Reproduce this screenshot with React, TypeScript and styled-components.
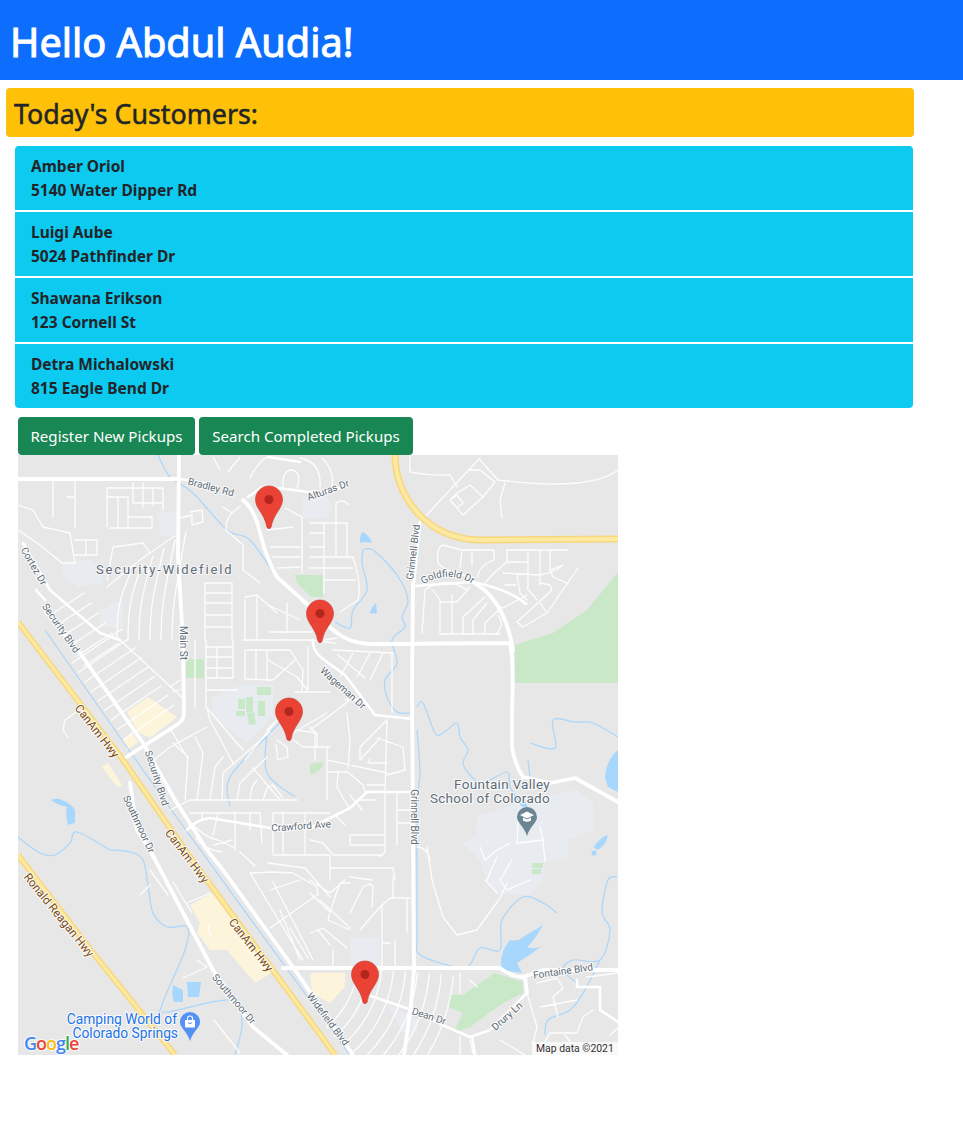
import React from "react";
import styled, { createGlobalStyle } from "styled-components";

const GlobalStyle = createGlobalStyle`
  html, body { margin: 0; padding: 0; background: #fff; }
  body { font-family: "Noto Sans", "Open Sans", sans-serif; color: #212529; }
`;

const Header = styled.header`
  background: #0d6efd;
  height: 80px;
  padding: 18px 0 0 10px;
  box-sizing: border-box;
`;
const Title = styled.h1`
  margin: 0;
  color: #fff;
  font-size: 39.7px;
  font-weight: 400;
  line-height: 48px;
  -webkit-text-stroke: 1px #fff;
`;
const Main = styled.main`
  padding: 8px 49px 0 6px;
`;
const Banner = styled.div`
  background: #ffc107;
  border-radius: 4px;
  height: 49px;
  padding-left: 8px;
  box-sizing: border-box;
`;
const BannerTitle = styled.h3`
  margin: 0;
  font-size: 26.8px;
  font-weight: 400;
  line-height: 52px;
  color: #212529;
  -webkit-text-stroke: 0.5px #212529;
`;
const CustomerList = styled.ul`
  list-style: none;
  margin: 9px 1px 0 9px;
  padding: 0;
  display: flex;
  flex-direction: column;
  gap: 2px;
  border-radius: 4px;
  overflow: hidden;
`;
const CustomerRow = styled.li`
  background: #0dcaf0;
  height: 64px;
  padding: 8px 16px;
  box-sizing: border-box;
`;
const CustomerLine = styled.div`
  font-size: 15.5px;
  font-weight: 700;
  line-height: 24px;
  color: #212529;
`;
const Actions = styled.div`
  display: flex;
  gap: 4px;
  margin: 9px 0 0 18px;
`;
const ActionButton = styled.button<{ $w: number }>`
  width: ${(p) => p.$w}px;
  height: 38px;
  padding: 0;
  border: 0;
  border-radius: 4px;
  background: #198754;
  color: #fff;
  font-family: inherit;
  font-size: 15.1px;
  line-height: 24px;
  white-space: nowrap;
`;
const MapFrame = styled.div`
  width: 600px;
  height: 600px;
  margin-left: 18px;
  padding-bottom: 77px;
`;
const MapSvg = styled.svg`
  display: block;
  width: 600px;
  height: 600px;
  background: #e7e7e7;
`;
const Label = styled.text<{ $kind?: string }>`
  font-family: Roboto, "Liberation Sans", sans-serif;
  font-size: ${(p) => (p.$kind === "place" ? 13.5 : p.$kind === "poi" ? 13.8 : p.$kind === "hwy" ? 11.7 : 10)}px;
  letter-spacing: ${(p) => (p.$kind === "place" ? 0.3 : 0)}px;
  fill: ${(p) => (p.$kind === "hwy" ? "#7a4a14" : p.$kind === "poi" ? "#1a73e8" : "#5c6b77")};
  stroke: #fff;
  stroke-opacity: 0.85;
  stroke-width: 2px;
  paint-order: stroke;
  text-anchor: ${(p) => (p.$kind === "place" || p.$kind === "poi" ? "end" : "middle")};
  dominant-baseline: ${(p) => (p.$kind === "place" || p.$kind === "poi" ? "auto" : "central")};
`;
const AreaName = styled.text`
  font-family: Roboto, "Liberation Sans", sans-serif;
  font-size: 13px;
  letter-spacing: 1.85px;
  fill: #5c6b77;
  stroke: #fff;
  stroke-opacity: 0.7;
  stroke-width: 2px;
  paint-order: stroke;
`;
const GoogleMark = styled.text`
  font-family: "Open Sans", "Liberation Sans", sans-serif;
  font-size: 18px;
  font-weight: 600;
  letter-spacing: -1px;
  stroke: #fff;
  stroke-opacity: 0.8;
  stroke-width: 2px;
  paint-order: stroke;
`;
const Credit = styled.text`
  font-family: Roboto, "Liberation Sans", sans-serif;
  font-size: 10.4px;
  fill: #333;
`;

const customers = [
  ["Amber Oriol", "5140 Water Dipper Rd"],
  ["Luigi Aube", "5024 Pathfinder Dr"],
  ["Shawana Erikson", "123 Cornell St"],
  ["Detra Michalowski", "815 Eagle Bend Dr"],
];

/* turn a run of points into a smooth curve, for creeks */
const smooth = (pts: number[][]) => {
  let d = `M${pts[0][0]} ${pts[0][1]}`;
  for (let i = 0; i < pts.length - 1; i++) {
    const p0 = pts[i - 1] || pts[i];
    const p1 = pts[i];
    const p2 = pts[i + 1];
    const p3 = pts[i + 2] || p2;
    const c1 = [p1[0] + (p2[0] - p0[0]) / 6, p1[1] + (p2[1] - p0[1]) / 6];
    const c2 = [p2[0] - (p3[0] - p1[0]) / 6, p2[1] - (p3[1] - p1[1]) / 6];
    d += ` C${c1[0].toFixed(1)} ${c1[1].toFixed(1)} ${c2[0].toFixed(1)} ${c2[1].toFixed(1)} ${p2[0]} ${p2[1]}`;
  }
  return d;
};

const parks = [
  "M515 645 L553 633 L587 610 L618 572 V683 H515Z",
  "M295 575 H323 V597 H311 L297 583Z",
  "M186 659 H204 V678 H186Z",
  "M257 687 H271 V695 H257Z",
  "M238 699 H245 V709 H238Z M246 697 H253 V712 H246Z M258 701 H265 V716 H258Z M236 711 H245 V716 H236Z M247 713 L254 712 L256 724 L249 725Z",
  "M310 764 L323 762 Q322 772 310 775Z",
  "M450 995 L463 995 L495 973 L523 982 L523 993 L503 1003 L470 1027 L453 1033 L463 1013 L448 1007Z",
  "M532 863 H543 V868 H532Z M532 869 H541 V874 H532Z",
];
const campus = [
  "M477 817 L517 803 L577 790 L593 803 V830 L568 840 L567 860 L545 862 L543 880 L530 895 L497 893 L487 880 L480 860 L463 843 L475 837Z",
  "M212 697 L240 685 H273 V715 L247 743 L212 717Z",
  "M350 938 H380 V967 H350Z",
  "M390 1007 L417 1018 V1033 H402Z",
  "M303 497 H328 L333 508 L326 518 H303Z",
  "M157 512 H177 V537 L160 535Z",
  "M63 562 L90 560 L103 570 L103 583 L78 587 L63 578Z",
  "M100 610 L123 600 V627 H100Z",
];
const commercial = [
  "M127 712 L148 697 L177 717 L150 738 L138 732Z",
  "M123 740 L132 733 L138 742 L127 750Z",
  "M102 767 L108 763 L122 785 L117 787Z",
  "M190 905 L212 893 L273 972 L255 983 L227 950 H210 L197 933 L200 923Z",
  "M310 973 H345 V987 L330 1003 L312 993Z",
  "M293 966 H333 V970 H293Z",
];
const water = [
  "M360 543 Q360 533 363 532 Q370 536 372 543 Q365 541 360 543Z",
  "M370 613 Q372 606 376 603 L377 613 Q373 614 370 613Z",
  "M605 778 Q606 760 618 750 V792 L608 787Z",
  "M594 847 Q600 837 608 835 Q606 846 597 850Z",
  "M51 800 Q55 798 60 799 Q72 804 75 810 V823 L68 825 Q65 815 67 807 Q57 805 51 800Z",
  "M173 985 L183 990 V1002 L174 1002 Q171 994 173 985Z",
  "M187 982 H201 L199 997 H188Z",
  "M510 940 Q518 942 523 937 L543 925 Q535 940 527 947 Q534 950 542 946 Q530 955 517 963 L522 973 L502 970 Q498 955 510 940Z",
  "M520 805 L525 800 L528 808Z",
];
const streams = [
  [[363,550],[373,550],[397,575],[408,600],[402,617],[405,627],[392,640],[397,663],[385,680],[387,697],[397,712],[410,713]],
  [[363,550],[362,563],[367,590],[353,610],[350,628],[335,622]],
  [[158,455],[170,477],[193,493],[227,530],[250,540],[277,577],[300,600]],
  [[417,707],[423,703],[435,733],[443,733],[457,723],[460,737],[468,750],[463,763],[472,777],[483,783],[507,772],[510,787],[523,807]],
  [[417,730],[420,773],[417,803],[417,880],[417,940],[418,953],[440,963],[467,967],[480,948],[500,950],[502,920],[523,897],[543,903],[557,913]],
  [[530,743],[555,748],[553,720],[575,722],[593,723],[618,737]],
  [[528,760],[530,778]],
  [[617,877],[608,880],[602,912],[610,930],[600,960],[573,960],[563,970],[577,983]],
  [[600,960],[585,990],[570,1010],[548,1020],[545,1035]],
  [[110,850],[130,852],[143,860],[148,885],[153,913],[167,927],[187,927],[185,950],[162,1005],[167,1012],[230,1000],[242,1023],[235,1055]],
  [[18,837],[40,853],[55,855],[70,843],[77,832],[110,850]],
  [[230,807],[230,777],[270,733],[280,723]],
  [[267,733],[267,773],[295,797]],
  [[45,630],[175,815],[350,1055]],
].map(smooth);
const thin = [
  "M53 480 V517 M75 480 V528 M67 497 H75 M107 488 V527 M118 497 V528 M128 497 V528 M152 517 V528 M107 488 H163 M107 497 H128 M128 517 H152 M110 528 H152",
  "M133 483 V503 M143 483 V507 M153 488 V505 M163 488 V510 M133 503 H163",
  "M18 505 L33 510 L43 527 L70 533 L75 563",
  "M18 530 L40 545 L62 563 L75 563 M75 540 H97 V555 H75 M86 540 V555",
  "M107 580 L113 547 L143 543 L150 553",
  "M107 587 L140 560 L173 537 L178 535",
  "M180 518 L192 515 V525 L203 522 L202 510 L190 512",
  "M213 457 L220 470 M240 457 L228 472 M267 457 Q258 462 250 478 M283 488 Q282 470 292 470 Q302 472 297 488 M300 458 Q322 462 320 488 M322 458 Q335 470 332 488",
  "M240 507 Q225 515 226 530 L243 545 L243 570 L260 583 M223 507 L232 513",
  "M267 530 L293 527 M270 547 H300 M273 557 H300 M302 517 V573 M285 508 L302 517 M278 568 L300 567",
  "M310 523 H347 M310 533 H323 M310 547 H323 M310 557 H353 M310 568 H353 M323 580 H355 M324 523 V593 M336 503 V557 M347 523 V557 M353 557 Q362 585 358 600 L340 612 M336 503 Q342 498 349 505",
  "M420 522 L480 458 M480 460 L498 480 Q550 486 577 483 Q605 480 618 470 M410 455 V472 Q430 476 450 475 L457 487",
  "M457 493 L470 485 L483 497 L463 515 L450 500Z M450 500 L457 495 L463 503 L457 508Z M470 470 L480 470 L495 482 L483 497 M505 483 L500 500 L502 518",
  "M475 578 Q445 572 438 563 Q436 550 442 545 L462 550 H494 V560 Q478 566 478 577 M462 550 L460 568 M472 550 V565",
  "M507 550 H568 M507 562 H527 M507 550 V562 L495 572 L485 583 M528 550 V587 M540 550 V575 M550 550 V570 L563 565 M503 573 L540 575 Q555 572 563 565",
  "M517 575 L520 593 L527 600 M540 583 L550 585 Q553 590 550 592 L517 622 L523 627 L547 613 L578 568 M550 570 L553 577 L567 583 M527 595 L503 608 M505 585 H516 M540 575 V585 M537 600 L527 588 M547 613 L540 603",
  "M425 590 L422 633 M433 590 L440 600 V633 M425 590 Q445 575 467 590 M452 595 V633 M440 602 H457 L470 587 M463 617 V633 M463 617 L485 597 M473 633 V620 L487 603 M485 633 V623 L502 607 M498 615 Q505 625 497 633 M440 634 H500",
  "M333 650 L393 653 M392 653 V690 M353 653 L340 677 M370 653 L357 677 M383 653 L370 680 M338 655 L365 678 M324 640 L337 638 M310 640 L335 643",
  "M310 730 L333 713 L350 700 M347 713 L350 740 L348 768 M360 760 L380 738 M387 720 L385 790 M387 720 L360 747 V760 M377 738 L403 747 L405 770 L387 775 M327 760 L387 773 M327 747 V797 M327 772 H348 L363 785 L365 792 M367 785 H385 M338 772 L337 787 L350 810 M310 727 L315 732 V760 M310 747 H327 M370 758 L368 763 H387 M345 700 L360 700 M392 690 V712",
  "M397 793 V845 M385 793 V852 L380 857 M397 823 H412 M397 810 H412 M350 835 H385 M350 845 H385 M350 835 V845 M310 840 L323 843 L333 855 H383 M330 857 V880 M330 868 H393 L395 880 M335 815 L345 825 M350 795 L362 810 M360 800 H375",
  "M190 813 H260 L262 843 M273 813 H330 M273 813 V853 M283 813 V853 M305 813 V853 M273 855 H330 M202 813 V820 M218 813 L213 835 M235 813 V850 M250 813 V830 M190 822 Q205 838 218 840 L235 848",
  "M170 810 L190 800 H297 M185 800 L188 757 L173 743 M197 800 L203 753 L195 737 M210 800 L215 767 L223 757 M222 800 L223 773 L270 732 M237 800 L240 783 L267 757 M250 800 L252 787 L257 780 M253 768 L280 800 M263 800 L267 788 L273 785 L282 797",
  "M207 708 L210 720 L233 763 M207 708 L243 750 M170 728 L187 757 M150 763 L170 747 L207 727 M195 640 V708 M206 640 V708 M217 647 V678 M207 647 H233 M207 657 H233 M207 668 H233 M207 678 H233 M233 640 V678 M207 690 H237",
  "M247 650 H290 L303 670 L302 690 M245 650 V678 M256 650 V680 M267 650 V680 M245 679 L273 680 L295 660 M268 660 L297 677 L308 690 M308 647 V690 M295 692 H330 M267 730 L277 720 L245 760",
  "M293 733 L327 713 M297 730 L317 733 V747 M293 740 L303 747 H330 M277 740 L287 747 L288 757 L278 760 L276 745 M327 747 V800",
  "M120 640 L185 700 M170 687 L180 680 M173 692 L185 688",
  "M63 730 L65 720 L82 708 M63 730 L68 738",
  "M173 882 L192 913 M187 903 L210 893 M197 960 L207 967 L183 978 M208 925 L210 935 M214 1020 L240 1053 M140 895 L150 885",
  "M250 873 L303 960 M273 882 L313 960 M270 928 L317 895 M250 873 L273 872 L293 873 L317 887 L318 895 M268 863 L305 868 L330 897 M330 945 L318 930 M290 928 L308 958 M270 890 L300 880 M280 910 L300 960",
  "M310 893 L330 912 L328 920 L350 930 M330 912 L340 883 H350 M350 913 L363 887 Q372 882 373 887 L372 907 M360 930 L380 907 L390 898 H410 M382 907 V970 M407 898 V932 M393 877 V898 M390 943 H382 M310 933 L323 928 L347 948 M333 950 V967 M350 877 L372 880 M310 880 L330 893 L345 880 M320 900 L350 928 M395 940 V968",
  "M527 993 L537 1027 L533 1043 M537 983 L557 978 L563 988 L553 997 L558 1017 M540 1007 L577 1000 M543 1045 L550 1033 H577 L583 1017 L593 1010 M587 977 L618 973 M460 973 V993 M470 980 L477 987 M470 1040 L473 1053 M460 1037 V1055 M500 1040 L525 1055 M565 1035 L580 1055 M610 1035 L618 1028",
  "M517 843 L543 840 L545 862 M480 847 L485 860 L497 850 L510 843 M497 857 L487 880 M430 860 Q427 847 417 847 M427 847 L432 880 L443 917 L457 935 L477 930 L500 898 L507 883 M540 827 L543 840 M518 820 L517 843 M512 860 L500 880 L507 890 L530 880 M485 880 L497 893",
  "M196 838 Q205 850 222 852 M240 852 L255 866 M214 845 L232 840 M150 870 L168 895",
];
const medium = [
  "M248 497 L262 487 Q275 487 307 492 Q335 492 347 485",
  "M180 479 L210 484 M268 457 L300 462",
  "M420 522 L414 583",
  "M526 604 Q510 590 473 582 L414 586",
  "M187 830 Q195 820 210 818 L270 828 H310 L350 808 L367 792 H410",
  "M313 640 C312 655 325 660 345 675 L375 715 L413 719",
  "M368 995 L412 1010 L447 1027 L470 1037 L490 1030 L527 993",
  "M472 1037 L475 1055",
  "M577 980 V987 H600 V1010 L618 1022",
  "M23 543 L50 590 L100 633 L120 640",
  "M36 590 L45 600",
];
const major = [
  "M18 479 H178",
  "M179 455 L178 557 L183 640 L184 713 Q184 720 178 724 L125 758",
  "M243 500 Q255 510 260 533 Q267 560 277 577 L310 607 Q330 630 345 638 Q360 645 380 644 L510 643 Q514 660 512 710 L512 747 Q515 765 523 777 L550 783 L575 778 L618 802",
  "M473 582 Q505 600 513 650",
  "M413 583 L412 690 L414 970 L411 1005 L404 1055",
  "M46 612 L80 653 L143 743 L175 800 L207 850 L223 870 L293 967 L353 1055",
  "M283 968 H500 Q512 977 523 977 L543 970 H618",
  "M130 783 L137 830 L150 850 L213 970 L253 1027 L287 1055",
  "M525 977 L527 993",
];

const fams: string[] = [];
for (let i = 0; i < 9; i++) {
  const x = 84 + i * 6.5;
  const y = 655 + i * 9.5;
  fams.push(`M${x - 12} ${y + 8} L${x + 38} ${y - 26}`);
}
for (let i = 0; i < 6; i++) {
  const x = 58 + i * 7;
  const y = 610 + i * 10;
  fams.push(`M${x - 9} ${y + 6} L${x + 26} ${y - 17}`);
}
for (let i = 0; i < 6; i++) {
  const x = 117 + i * 11;
  const ey = 580 - (i + 1) * 8;
  fams.push(`M${x} 640 C${x} 610 ${x + 2} 598 ${x + 14} ${ey}`);
}
fams.push("M205 583 V640 M232 583 V640 M205 583 H232 M205 593 H232 M205 603 H232 M205 615 H232 M205 627 H232 M245 600 V640 M245 597 L257 595 L277 613 M257 597 V640 M268 605 L300 620 M287 603 V633 M270 632 H312 M243 640 H310");
/* the fan of streets south of Fontaine Blvd */
const arc = (r: number) => {
  const end = r <= 124 ? 50 : (Math.asin(95 / r) * 180) / Math.PI;
  const p = (a: number) => [270 + r * Math.cos((a * Math.PI) / 180), 960 + r * Math.sin((a * Math.PI) / 180)];
  const [x0, y0] = p(5);
  const [x1, y1] = p(end);
  return `M${x0.toFixed(1)} ${y0.toFixed(1)} A${r} ${r} 0 0 1 ${x1.toFixed(1)} ${y1.toFixed(1)}`;
};
for (let r = 88; r <= 184; r += 12) fams.push(arc(r));

const labels: [string, number, number, number, string?][] = [
  ["Bradley Rd", 211, 487, 15],
  ["Alturas Dr", 328, 490, -20],
  ["Grinnell Blvd", 413, 552, -83],
  ["Cortez Dr", 34, 566, 60],
  ["Security Blvd", 61, 628, 55],
  ["Main St", 183, 643, 90],
  ["Wageman Dr", 343, 688, 42],
  ["CanAm Hwy", 97, 731, 52, "hwy"],
  ["Security Blvd", 157, 778, 72],
  ["Southmoor Dr", 139, 824, 65],
  ["CanAm Hwy", 187, 856, 53, "hwy"],
  ["Crawford Ave", 301, 826, -4],
  ["Grinnell Blvd", 414, 817, 90],
  ["CanAm Hwy", 251, 945, 52, "hwy"],
  ["Ronald Reagan Hwy", 59, 915, 51, "hwy"],
  ["Southmoor Dr", 234, 999, 50],
  ["Widefield Blvd", 328, 1019, 53],
  ["Dean Dr", 429, 1016, 18],
  ["Drury Ln", 507, 1016, -42],
  ["Fontaine Blvd", 563, 971, -8],
];

const Pin = ({ x, y }: { x: number; y: number }) => (
  <g transform={`translate(${x - 13.5} ${y - 43})`}>
    <path
      d="M13.5 0C6 0 0 6 0 13.5C0 23 9 27 11.5 41.5Q13.5 44 15.5 41.5C18 27 27 23 27 13.5C27 6 21 0 13.5 0Z"
      fill="#ea4335"
      stroke="#c5372c"
      strokeWidth="0.6"
    />
    <circle cx="13.5" cy="13.5" r="4.5" fill="#b3261e" />
  </g>
);

const PoiPin = ({ x, y, color, children }: { x: number; y: number; color: string; children: React.ReactNode }) => (
  <g transform={`translate(${x} ${y})`}>
    <path d="M-10 0A10 10 0 0 1 10 0C10 6 3 9 0 19C-3 9 -10 6 -10 0Z" fill={color} />
    {children}
  </g>
);

const StreetMap = () => (
  <MapSvg viewBox="18 455 600 600" role="img" aria-label="Map">
    {campus.map((d) => <path key={d} d={d} fill="#e8ebef" />)}
    {parks.map((d) => <path key={d} d={d} fill="#c9e8c8" />)}
    {commercial.map((d) => <path key={d} d={d} fill="#fdf5db" />)}
    {streams.map((d) => <path key={d} d={d} fill="none" stroke="#a9d6fb" strokeWidth="1.2" />)}
    {water.map((d) => <path key={d} d={d} fill="#a8d7fd" />)}
    <g fill="none" stroke="#fff" strokeLinejoin="round" strokeLinecap="round">
      <path d={thin.join(" ")} strokeWidth="1.3" opacity="0.92" />
      <path d={fams.join(" ")} strokeWidth="1.3" opacity="0.92" />
      <path d={medium.join(" ")} strokeWidth="2.6" />
      <path d={major.join(" ")} strokeWidth="3.8" />
    </g>
    <circle cx="594" cy="853" r="2.5" fill="#a8d7fd" />
    <g fill="none">
      <g stroke="#f7d77e" strokeWidth="7">
        <path d="M395 455 C395 495 425 539 480 540 L618 539" />
        <path d="M18 622 L123 760 L190 857 L335 1055" strokeWidth="6" />
        <path d="M18 855 L93 953 L175 1055" strokeWidth="6" />
      </g>
      <g stroke="#fde9a0" strokeWidth="4">
        <path d="M395 455 C395 495 425 539 480 540 L618 539" />
        <path d="M18 622 L123 760 L190 857 L335 1055" strokeWidth="3" />
        <path d="M18 855 L93 953 L175 1055" strokeWidth="3" />
      </g>
    </g>
    <path id="goldfield" d="M420 587 Q446 567 476 586" fill="none" />
    <Label $kind="road" style={{ dominantBaseline: "auto" }}>
      <textPath href="#goldfield" startOffset="50%">Goldfield Dr</textPath>
    </Label>
    {labels.map(([t, x, y, r, k]) => (
      <Label key={t + x} $kind={k} transform={`translate(${x} ${y}) rotate(${r})`}>{t}</Label>
    ))}
    <AreaName x="96" y="574">Security-Widefield</AreaName>
    <Label $kind="place" x="550" y="789">Fountain Valley</Label>
    <Label $kind="place" x="550" y="803">School of Colorado</Label>
    <Label $kind="poi" x="177" y="1024">Camping World of</Label>
    <Label $kind="poi" x="178" y="1038">Colorado Springs</Label>
    <PoiPin x={527} y={817} color="#6b8593">
      <path d="M-7 -2L0 -5.5L7 -2L0 1.5Z M-4 0.5V3.5Q0 6 4 3.5V0.5L0 2.5Z" fill="#fff" />
    </PoiPin>
    <PoiPin x={190} y={1022} color="#5491f5">
      <path d="M-5 -2H5V4.5Q5 5.5 4 5.5H-4Q-5 5.5 -5 4.5Z" fill="#fff" />
      <path d="M-2.5 -2V-3.5A2.5 2.5 0 0 1 2.5 -3.5V-2" fill="none" stroke="#fff" strokeWidth="1.2" />
      <path d="M-2 0.5Q0 3 2 0.5" fill="none" stroke="#5491f5" strokeWidth="1" />
    </PoiPin>
    <Pin x={269} y={529} />
    <Pin x={320} y={643} />
    <Pin x={289} y={741} />
    <Pin x={365} y={1004} />
    <GoogleMark x="24" y="1050">
      <tspan fill="#4285f4">G</tspan>
      <tspan fill="#ea4335">o</tspan>
      <tspan fill="#fbbc05">o</tspan>
      <tspan fill="#4285f4">g</tspan>
      <tspan fill="#34a853">l</tspan>
      <tspan fill="#ea4335">e</tspan>
    </GoogleMark>
    <rect x="532" y="1042" width="86" height="13" fill="#fff" fillOpacity="0.7" />
    <Credit x="536" y="1052">Map data ©2021</Credit>
  </MapSvg>
);

export default function App() {
  return (
    <>
      <GlobalStyle />
      <Header>
        <Title>Hello Abdul Audia!</Title>
      </Header>
      <Main>
        <Banner>
          <BannerTitle>Today's Customers:</BannerTitle>
        </Banner>
        <CustomerList>
          {customers.map(([name, addr]) => (
            <CustomerRow key={name}>
              <CustomerLine>{name}</CustomerLine>
              <CustomerLine>{addr}</CustomerLine>
            </CustomerRow>
          ))}
        </CustomerList>
      </Main>
      <Actions>
        <ActionButton $w={177}>Register New Pickups</ActionButton>
        <ActionButton $w={214}>Search Completed Pickups</ActionButton>
      </Actions>
      <MapFrame>
        <StreetMap />
      </MapFrame>
    </>
  );
}
